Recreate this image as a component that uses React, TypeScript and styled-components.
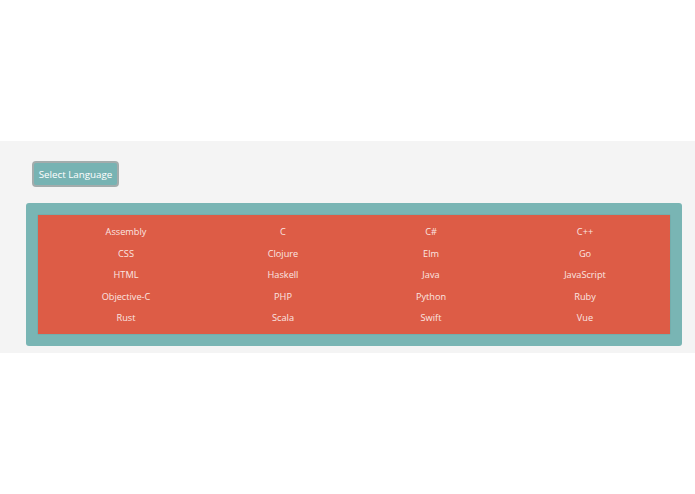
import React from "react";
import styled, { createGlobalStyle } from "styled-components";

const Global = createGlobalStyle`
  html, body { margin: 0; padding: 0; background: #ffffff; }
  body { font-family: "Open Sans", "Liberation Sans", sans-serif; }
`;

const Page = styled.div`
  padding-top: 141px;
`;

const Band = styled.section`
  background: #f4f4f4;
  padding: 20px 13px 7px 26px;
  display: flex;
  flex-direction: column;
  align-items: flex-start;
`;

const SelectButton = styled.button`
  margin-left: 6px;
  height: 26px;
  width: 87px;
  box-sizing: border-box;
  padding: 0;
  background: #77b3b3;
  border: 2px solid #a3acac;
  border-radius: 4px;
  color: #ffffff;
  font-family: "Open Sans", "Liberation Sans", sans-serif;
  font-size: 9.8px;
  cursor: pointer;
`;

const Frame = styled.div`
  margin-top: 16px;
  align-self: stretch;
  background: #79b5b4;
  border-radius: 3px;
  padding: 12px;
`;

const Grid = styled.div`
  background: #dd5c46;
  box-shadow: 0 0 1px rgba(0, 0, 0, 0.25);
  display: grid;
  grid-template-columns: 176px 138px 158px 1fr;
  padding: 6px 0 5px 0;
`;

const Cell = styled.div<{ $last?: boolean }>`
  height: 21.5px;
  line-height: 21.5px;
  text-align: center;
  color: #fbe6e2;
  font-size: 9.2px;
  padding-right: ${(p) => (p.$last ? "10px" : "0")};
`;

const languages = [
  "Assembly", "C", "C#", "C++",
  "CSS", "Clojure", "Elm", "Go",
  "HTML", "Haskell", "Java", "JavaScript",
  "Objective-C", "PHP", "Python", "Ruby",
  "Rust", "Scala", "Swift", "Vue",
];

export default function App() {
  return (
    <>
      <Global />
      <Page>
        <Band>
          <SelectButton>Select Language</SelectButton>
          <Frame>
            <Grid>
              {languages.map((l, i) => (
                <Cell key={l} $last={i % 4 === 3}>
                  {l}
                </Cell>
              ))}
            </Grid>
          </Frame>
        </Band>
      </Page>
    </>
  );
}
